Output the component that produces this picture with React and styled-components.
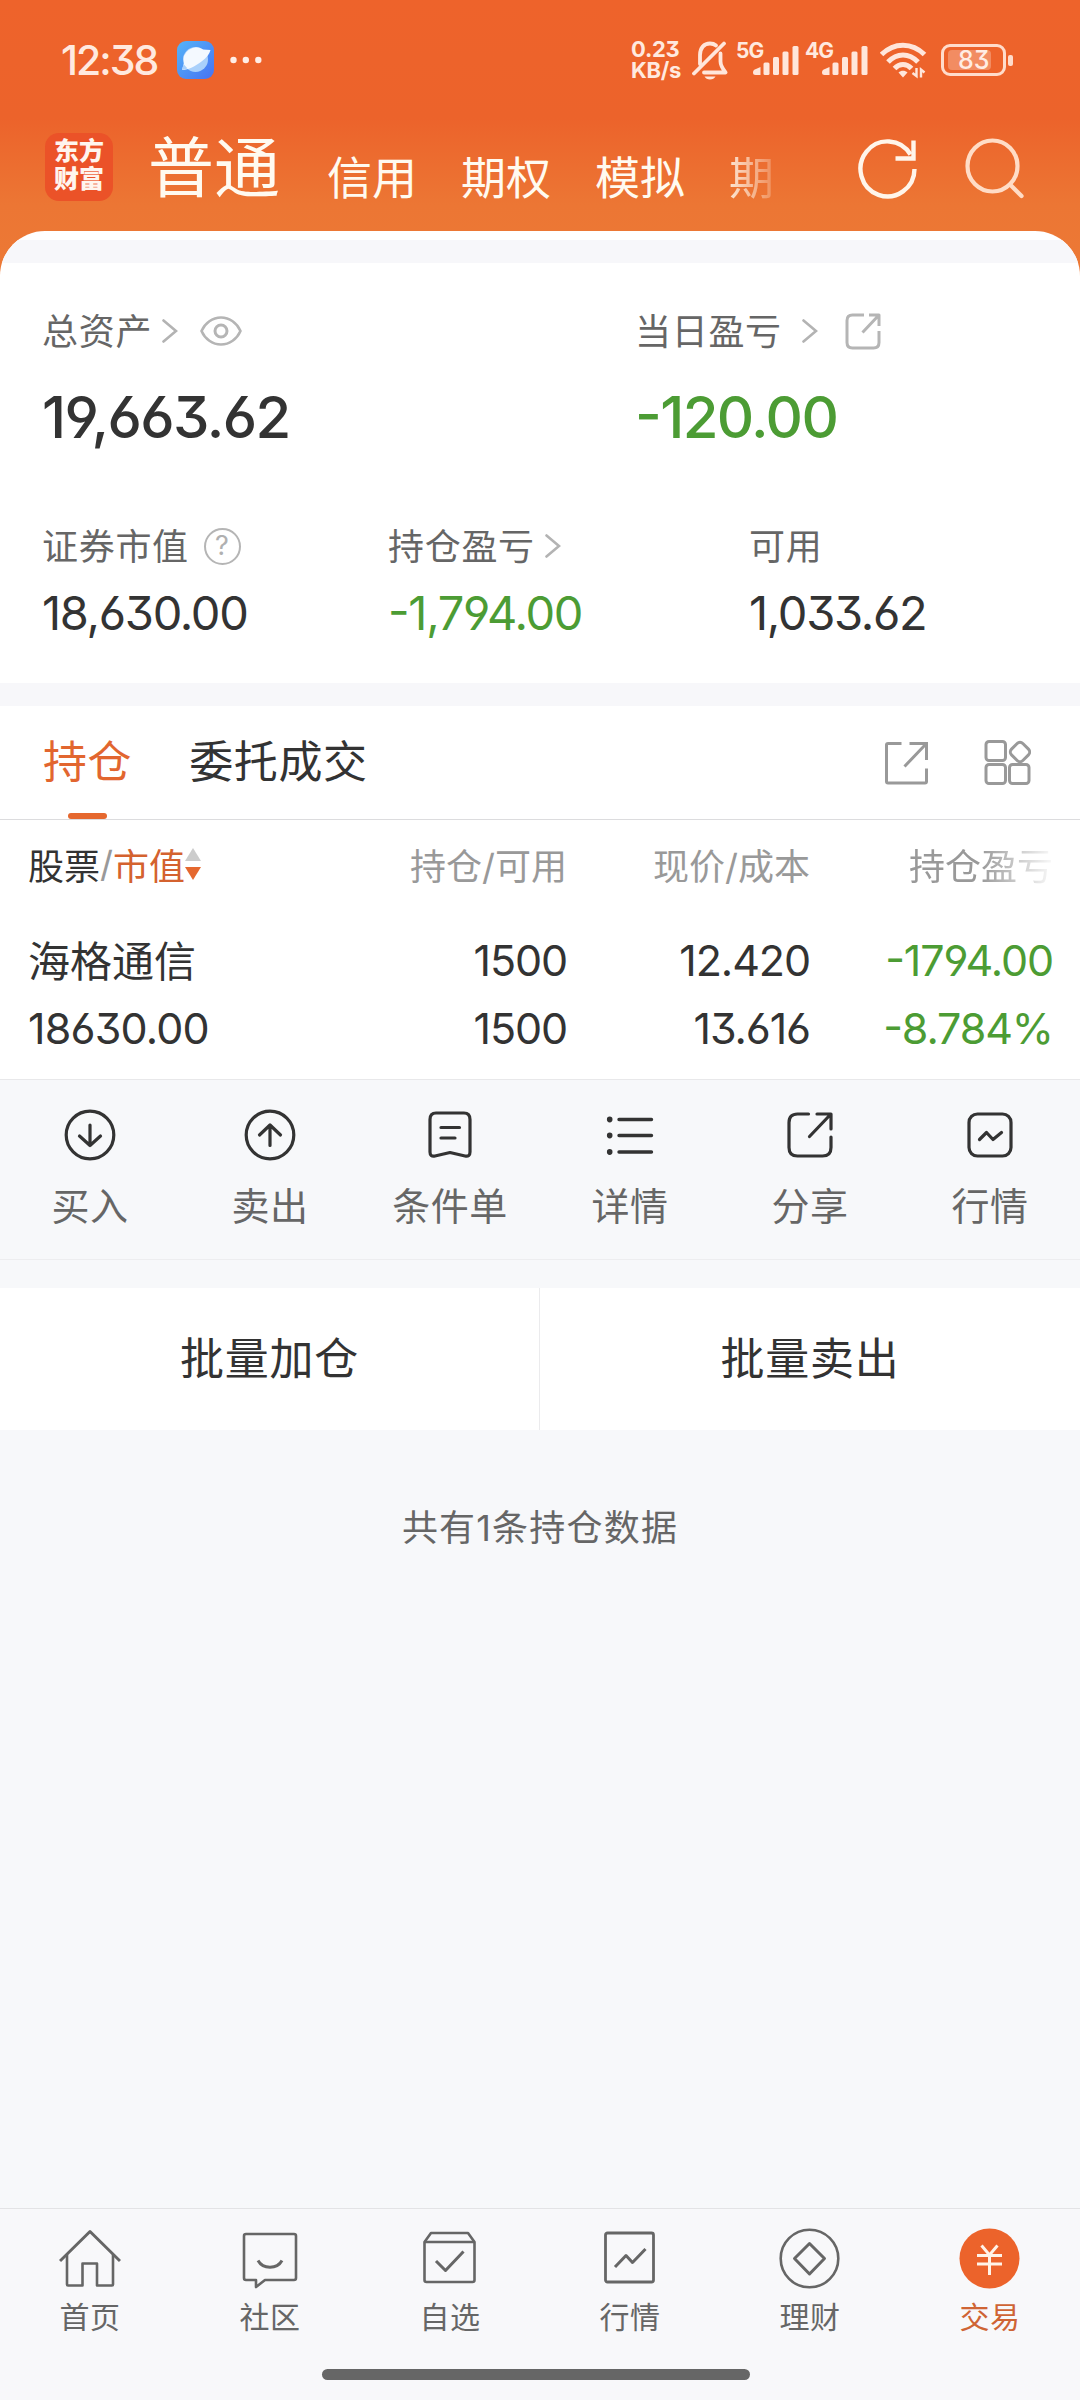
import styled, { createGlobalStyle } from "styled-components";

const actions = [
  { label: "买入", icon: <BuyIcon /> },
  { label: "卖出", icon: <SellIcon /> },
  { label: "条件单", icon: <OrderIcon /> },
  { label: "详情", icon: <ListIcon /> },
  { label: "分享", icon: <ShareRoundIcon /> },
  { label: "行情", icon: <TrendIcon /> },
];

const navItems = [
  { label: "首页", icon: <HomeIcon /> },
  { label: "社区", icon: <CommunityIcon /> },
  { label: "自选", icon: <WatchIcon /> },
  { label: "行情", icon: <MarketIcon /> },
  { label: "理财", icon: <WealthIcon /> },
  { label: "交易", icon: <TradeIcon />, active: true },
];

const App = () => {
  return (
    <>
      <GlobalStyle />
      <Screen>
        <StatusBar>
          <Clock>12:38</Clock>
          <PlanetIcon />
          <DotsIcon />
          <StatusRight>
            <Speed>
              0.23
              <br />
              KB/s
            </Speed>
            <BellOffIcon />
            <Network>5G</Network>
            <SignalIcon />
            <Network $second>4G</Network>
            <SignalIcon />
            <WifiIcon />
            <Battery>
              <div className="body">
                <span>83</span>
              </div>
              <div className="tip" />
            </Battery>
          </StatusRight>
        </StatusBar>

        <TopBar>
          <Logo>
            <span>东方</span>
            <span>财富</span>
          </Logo>
          <Modes>
            <Mode $active>普通</Mode>
            <Mode>信用</Mode>
            <Mode>期权</Mode>
            <Mode>模拟</Mode>
            <Mode $fade>期</Mode>
          </Modes>
          <TopIcons>
            <RefreshIcon />
            <SearchIcon />
          </TopIcons>
        </TopBar>

        <Sheet>
          <Band />
          <Account>
            <Stats $columns="593px 1fr">
              <Stat $big>
                <div className="label">
                  <span>总资产</span>
                  <Chevron $left={10} />
                  <EyeIcon />
                </div>
                <strong>19,663.62</strong>
              </Stat>
              <Stat $big $down>
                <div className="label">
                  <span>当日盈亏</span>
                  <Chevron $left={20} />
                  <ShareSmallIcon />
                </div>
                <strong>-120.00</strong>
              </Stat>
            </Stats>
            <Stats $columns="346px 361px 1fr">
              <Stat>
                <div className="label">
                  <span>证券市值</span>
                  <Help>?</Help>
                </div>
                <strong>18,630.00</strong>
              </Stat>
              <Stat $down>
                <div className="label">
                  <span>持仓盈亏</span>
                  <Chevron $left={10} />
                </div>
                <strong>-1,794.00</strong>
              </Stat>
              <Stat>
                <div className="label">
                  <span>可用</span>
                </div>
                <strong>1,033.62</strong>
              </Stat>
            </Stats>
          </Account>
          <Band />

          <Tabs>
            <Tab $active>持仓</Tab>
            <Tab>委托成交</Tab>
            <div className="tools">
              <ShareSquareIcon />
              <GridIcon />
            </div>
          </Tabs>

          <Table>
            <HeadRow>
              <div className="first">
                <b>股票</b>/<em>市值</em>
                <SortIcon />
              </div>
              <div>持仓/可用</div>
              <div>现价/成本</div>
              <div className="fade">持仓盈亏</div>
            </HeadRow>
            <Row>
              <div className="name">海格通信</div>
              <div>1500</div>
              <div>12.420</div>
              <div className="down">-1794.00</div>
            </Row>
            <Row>
              <div>18630.00</div>
              <div>1500</div>
              <div>13.616</div>
              <div className="down">-8.784%</div>
            </Row>
          </Table>

          <Actions>
            {actions.map(({ label, icon }) => (
              <Action key={label}>
                {icon}
                <span>{label}</span>
              </Action>
            ))}
          </Actions>

          <Batch>
            <button>批量加仓</button>
            <button>批量卖出</button>
          </Batch>

          <Summary>共有1条持仓数据</Summary>

          <BottomNav>
            <nav>
              {navItems.map(({ label, icon, active }) => (
                <NavItem key={label} $active={active}>
                  {icon}
                  <span>{label}</span>
                </NavItem>
              ))}
            </nav>
            <HomeBar />
          </BottomNav>
        </Sheet>
      </Screen>
    </>
  );
};

/* ---------- icons ---------- */

function PlanetIcon() {
  return (
    <svg width="37" height="38" viewBox="0 0 37 38">
      <defs>
        <linearGradient id="sky" x1="0" y1="0" x2="1" y2="1">
          <stop offset="0" stopColor="#55b4f8" />
          <stop offset="1" stopColor="#4672f3" />
        </linearGradient>
      </defs>
      <rect width="37" height="38" rx="9" fill="url(#sky)" />
      <circle cx="18.5" cy="18.5" r="12.5" fill="#a9d0fb" />
      <path d="M5 29l2-7a12.500 12.500 0 0 1 19-13.500l7.500.5c-1 4-4 8-9 11.500C18 25 12 29 5 29z" fill="#f4f9ff" />
      <path d="M5 29l1.500-6 4 4.500z" fill="#a9d0fb" />
    </svg>
  );
}

function DotsIcon() {
  return (
    <svg className="dots" width="32" height="8" viewBox="0 0 32 8" fill="#ffede6">
      <circle cx="3.500" cy="4" r="3.200" />
      <circle cx="15.800" cy="4" r="3.200" />
      <circle cx="28.300" cy="4" r="3.200" />
    </svg>
  );
}

function BellOffIcon() {
  return (
    <svg className="bell" width="36" height="40" viewBox="0 0 36 40" fill="none" stroke="#ffe6db" strokeWidth="3.800" strokeLinecap="round">
      <path d="M8 24V15C8 8 12 3.500 18 3.500c2.500 0 4.500.7 6 2" />
      <path d="M28.500 13.500v8c0 4 2 7 5 11H12" strokeLinejoin="round" />
      <path d="M32 3.500L2 33.500" />
      <path d="M12.500 36.500h11c-1 2-3 3-5.500 3s-4.500-1-5.500-3z" fill="#ffe6db" stroke="none" />
    </svg>
  );
}

function SignalIcon() {
  return (
    <svg className="signal" width="46" height="31" viewBox="0 0 46 31" fill="#ffe6db">
      <path d="M0 27.500q0-3 3-3.500l4.500-2v8H2.500Q0 30 0 27.500z" />
      <rect x="10.500" y="17.500" width="6" height="12.500" rx="1.500" />
      <rect x="20" y="12" width="6" height="18" rx="1.500" />
      <rect x="29.500" y="6.500" width="6" height="23.500" rx="1.500" />
      <rect x="39.500" y="1" width="6" height="29" rx="1.500" />
    </svg>
  );
}

function WifiIcon() {
  return (
    <svg className="wifi" width="48" height="37" viewBox="0 0 48 37" fill="none" stroke="#ffe6db" strokeWidth="5">
      <path d="M1.500 12.500C14 0 32 0 44.500 12.500" />
      <path d="M8 20C17 10.500 29 10.500 38 20" />
      <path d="M14.500 26.500c5-5.500 12-5.500 17 0" />
      <path d="M18.500 30.500c2.500-2.500 6.500-2.500 9 0L23 35.500z" fill="#ffe6db" stroke="none" />
      <path d="M36.500 26v8l-4-3M41 35.500v-8l3.500 3" strokeWidth="2.400" />
    </svg>
  );
}

function RefreshIcon() {
  return (
    <svg width="60" height="61" viewBox="0 0 60 61" fill="none" stroke="#fff5ea" strokeWidth="4.400">
      <path d="M56.500 31A27 27.500 0 1 1 52.500 16.500" />
      <path d="M55.500 2.500v18H37.500" />
    </svg>
  );
}

function SearchIcon() {
  return (
    <svg width="60" height="61" viewBox="0 0 60 61" fill="none" stroke="#ffdcc6" strokeWidth="4.200">
      <ellipse cx="27.500" cy="28" rx="25" ry="25.500" />
      <path d="M45 46.500L56.500 58" strokeLinecap="round" />
    </svg>
  );
}

function Chevron({ $left }) {
  return (
    <ChevronBox $left={$left}>
      <svg width="16" height="24" viewBox="0 0 16 24" fill="none" stroke="#b3b3b3" strokeWidth="2.600" strokeLinecap="round">
        <path d="M1.500 1.500L14 12 1.500 22.500" />
      </svg>
    </ChevronBox>
  );
}

function EyeIcon() {
  return (
    <svg className="eye" width="42" height="30" viewBox="0 0 42 30" fill="none" stroke="#b5b5b5" strokeWidth="2.600">
      <path d="M1.500 15C5 7 12.500 1.500 21 1.500S37 7 40.500 15C37 23 29.500 28.500 21 28.500S5 23 1.500 15z" strokeLinejoin="round" />
      <circle cx="21" cy="15" r="6" strokeWidth="3" />
    </svg>
  );
}

function ShareSmallIcon() {
  return (
    <svg className="share" width="36" height="37" viewBox="0 0 36 37" fill="none" stroke="#b5b5b5" strokeWidth="3">
      <path d="M19 2H7.500Q2 2 2 7.500v22Q2 35 7.500 35h21Q34 35 34 29.500V18" />
      <path d="M24 2h10v11M33.500 2.500L17.500 19.500" strokeLinejoin="round" />
    </svg>
  );
}

function ShareSquareIcon() {
  return (
    <svg width="44" height="44" viewBox="0 0 44 44" fill="none" stroke="#999" strokeWidth="3">
      <path d="M17.500 2.500H4Q2.500 2.500 2.500 4v36.500q0 1.500 1.500 1.500h37q1.500 0 1.500-1.500V27.500" />
      <path d="M25.500 2.500h17V19M41.500 3.500L20.500 25.500" />
    </svg>
  );
}

function GridIcon() {
  return (
    <svg width="47" height="47" viewBox="0 0 47 47" fill="none" stroke="#999" strokeWidth="3">
      <rect x="2" y="2.500" width="19.500" height="19" rx="3" />
      <rect x="2" y="25.500" width="19.500" height="19" rx="3" />
      <rect x="25.500" y="25.500" width="19.500" height="19" rx="3" />
      <rect x="28" y="5" width="16" height="16" rx="4" transform="rotate(45 36 13)" />
    </svg>
  );
}

function SortIcon() {
  return (
    <svg width="16" height="32" viewBox="0 0 16 32">
      <path d="M8 0l8 13H0z" fill="#ccc" />
      <path d="M0 19h16L8 32z" fill="#e5682f" />
    </svg>
  );
}

function BuyIcon() {
  return (
    <svg width="52" height="52" viewBox="0 0 52 52" fill="none" stroke="#333" strokeWidth="3.200" strokeLinecap="round" strokeLinejoin="round">
      <circle cx="26" cy="26" r="23.800" />
      <path d="M26 16v20.500M15.500 27L26 36.500 36.500 27" />
    </svg>
  );
}

function SellIcon() {
  return (
    <svg width="52" height="52" viewBox="0 0 52 52" fill="none" stroke="#333" strokeWidth="3.200" strokeLinecap="round" strokeLinejoin="round">
      <circle cx="26" cy="26" r="23.800" />
      <path d="M26 36.500V16M15.500 26L26 16l10.500 10" />
    </svg>
  );
}

function OrderIcon() {
  return (
    <svg width="52" height="52" viewBox="0 0 52 52" fill="none" stroke="#333" strokeWidth="3.200" strokeLinecap="round" strokeLinejoin="round">
      <path d="M12 4h28q6 0 6 6.500V43q0 5-5 4l-15-3.500L11 47q-5 1-5-4V10.500Q6 4 12 4z" />
      <path d="M17 18.500h18.500M17 29h14" />
    </svg>
  );
}

function ListIcon() {
  return (
    <svg width="52" height="52" viewBox="0 0 52 52" fill="none" stroke="#333" strokeWidth="3.400" strokeLinecap="round">
      <path d="M15 10.500h32.500M15 26.500h32.500M15 43h32.500" />
      <path d="M5.700 10.400v.2M5.700 26.400v.2M5.700 42.900v.2" strokeWidth="5.600" />
    </svg>
  );
}

function ShareRoundIcon() {
  return (
    <svg width="52" height="52" viewBox="0 0 52 52" fill="none" stroke="#333" strokeWidth="3.200" strokeLinecap="round" strokeLinejoin="round">
      <path d="M24.500 5H13.500Q5 5 5 13.500v25Q5 47 13.500 47h25Q47 47 47 38.500V28" />
      <path d="M33 5h14v15M46 6L25.500 27.500" />
    </svg>
  );
}

function TrendIcon() {
  return (
    <svg width="52" height="52" viewBox="0 0 52 52" fill="none" stroke="#333" strokeWidth="3.200" strokeLinecap="round" strokeLinejoin="round">
      <rect x="5" y="5" width="42" height="42" rx="8.500" />
      <path d="M15.500 30.500l7-7 6.500 7 8.500-7" />
    </svg>
  );
}

function HomeIcon() {
  return (
    <svg width="62" height="62" viewBox="0 0 62 62" fill="none" stroke="#666" strokeWidth="2.600" strokeLinejoin="round">
      <path d="M1 33L31 3.500l30 29.500" strokeWidth="3" />
      <path d="M8 26.500v30q0 1 1 1h14.500V35.500h14.500v22h15q1 0 1-1v-30" />
    </svg>
  );
}

function CommunityIcon() {
  return (
    <svg width="62" height="62" viewBox="0 0 62 62" fill="none" stroke="#666" strokeWidth="2.600" strokeLinejoin="round">
      <path d="M7 6h48q2 0 2 2v42q0 2-2 2H26l-9 7v-7H7q-2 0-2-2V8q0-2 2-2z" />
      <path d="M19 32.500c5 9 19 9 24 0" strokeWidth="3" />
    </svg>
  );
}

function WatchIcon() {
  return (
    <svg width="62" height="62" viewBox="0 0 62 62" fill="none" stroke="#666" strokeWidth="2.600" strokeLinejoin="round">
      <path d="M5.500 14l6.500-9h37l6.500 9v38q0 2-2 2h-46q-2 0-2-2z" />
      <path d="M5.500 14h50" />
      <path d="M17 33l9.500 9.500 18-19" strokeWidth="3" />
    </svg>
  );
}

function MarketIcon() {
  return (
    <svg width="62" height="62" viewBox="0 0 62 62" fill="none" stroke="#666" strokeWidth="2.800" strokeLinejoin="round">
      <rect x="6.500" y="5" width="48" height="49" rx="2" />
      <path d="M16 39l11-11.500 6.500 7 13-13.500" strokeWidth="3" />
    </svg>
  );
}

function WealthIcon() {
  return (
    <svg width="62" height="62" viewBox="0 0 62 62" fill="none" stroke="#666" strokeWidth="2.600" strokeLinejoin="round">
      <circle cx="30.500" cy="30.500" r="28.800" />
      <path d="M30.500 15.500L45.500 30.500 30.500 46 15.500 30.500z" strokeWidth="3" />
    </svg>
  );
}

function TradeIcon() {
  return (
    <svg width="62" height="62" viewBox="0 0 62 62" fill="none" stroke="#fff3e8" strokeWidth="3">
      <circle cx="30.500" cy="30.500" r="30" fill="#ec632b" stroke="none" />
      <path d="M22.500 17.500l8 9.500 8-9.500M30.500 27v20M18 27.500h25M18 36h25" />
    </svg>
  );
}

/* ---------- styles ---------- */

const GlobalStyle = createGlobalStyle`
  * {
    box-sizing: border-box;
  }
  body {
    margin: 0;
    font-family: Inter, "Noto Sans CJK SC", sans-serif;
    font-feature-settings: "cv03", "cv04", "cv09";
    color: #333;
  }
  svg {
    display: block;
    flex: none;
  }
`;

const Screen = styled.div`
  width: 1080px;
  height: 2400px;
  display: flex;
  flex-direction: column;
  overflow: hidden;
  background: linear-gradient(#ee632b 0, #ec632b 118px, #ec7634 205px, #ec7a36 300px);
`;

const StatusBar = styled.div`
  height: 120px;
  padding: 0 67px 0 61px;
  display: flex;
  align-items: center;

  .dots {
    margin-left: 16px;
  }
`;

const Clock = styled.div`
  width: 116px;
  font-size: 41px;
  font-weight: 500;
  letter-spacing: -2px;
  color: #ffe9df;
`;

const StatusRight = styled.div`
  margin-left: auto;
  display: flex;
  align-items: center;

  .bell {
    margin-left: 11px;
  }
  .signal {
    margin-left: -12px;
  }
  .wifi {
    margin-left: 12px;
  }
`;

const Speed = styled.div`
  width: 50px;
  font-size: 22px;
  font-weight: 700;
  line-height: 21px;
  letter-spacing: -0.3px;
  white-space: nowrap;
  color: #ffe9df;
`;

const Network = styled.span`
  width: 29px;
  margin-left: ${({ $second }) => ($second ? "6px" : "8px")};
  font-size: 21px;
  font-weight: 700;
  line-height: 21px;
  padding-bottom: 20px;
  letter-spacing: -1px;
  color: #ffe9df;
`;

const Battery = styled.div`
  display: flex;
  align-items: center;
  margin-left: 13px;

  .body {
    width: 65px;
    height: 32px;
    padding: 3px 12px 3px 4px;
    border: 3px solid #ffdccb;
    border-radius: 9px;
    display: flex;
  }
  span {
    flex: 1;
    padding-left: 10px;
    font-size: 25px;
    font-weight: 500;
    line-height: 21px;
    border-radius: 4px;
    color: #ffece3;
    background: #f28c62;
  }
  .tip {
    width: 5px;
    height: 11px;
    margin-left: 2px;
    border-radius: 2px;
    background: #ffdccb;
  }
`;

const TopBar = styled.header`
  height: 111px;
  padding: 0 55px 0 45px;
  display: flex;
`;

const Logo = styled.div`
  width: 68px;
  height: 68px;
  margin-top: 13px;
  padding-top: 4px;
  display: flex;
  flex-direction: column;
  align-items: center;
  border-radius: 14px;
  font-size: 25px;
  font-weight: 900;
  line-height: 28px;
  color: #fff5ee;
  background: #eb5228;
`;

const Modes = styled.div`
  display: flex;
  align-items: flex-start;
  margin-left: 35px;
  gap: 44px;
`;

const Mode = styled.div`
  font-size: ${({ $active }) => ($active ? "66px" : "45px")};
  line-height: ${({ $active }) => ($active ? "96px" : "118px")};
  padding-right: ${({ $active }) => ($active ? "3px" : "0")};
  color: #fffaf0;
  ${({ $fade }) =>
    $fade && "mask-image: linear-gradient(90deg, rgba(0,0,0,.85), rgba(0,0,0,.2));"}
`;

const TopIcons = styled.div`
  display: flex;
  margin: 18px 0 0 auto;
  gap: 47px;
`;

const Sheet = styled.main`
  flex: 1;
  padding-top: 9px;
  display: flex;
  flex-direction: column;
  border-radius: 45px 45px 0 0;
  overflow: hidden;
  background: #fff;
`;

const Band = styled.div`
  flex: none;
  height: 23px;
  background: #f7f7fa;
`;

const Account = styled.section`
  height: 420px;
  padding: 46px 42px 0;
  display: flex;
  flex-direction: column;
  gap: 78px;
`;

const Stats = styled.div`
  display: grid;
  grid-template-columns: ${({ $columns }) => $columns};
`;

const Stat = styled.div`
  display: flex;
  flex-direction: column;
  gap: ${({ $big }) => ($big ? "35px" : "21px")};

  .label {
    height: 44px;
    display: flex;
    align-items: center;
    font-size: 36px;
    letter-spacing: 0.7px;
    color: #666;
  }
  .label > span:first-child {
    margin-top: -4px;
  }
  .eye {
    margin-left: 22px;
  }
  .share {
    margin-left: 27px;
  }
  strong {
    font-size: ${({ $big }) => ($big ? "58px" : "47px")};
    line-height: ${({ $big }) => ($big ? "58px" : "47px")};
    font-weight: ${({ $big }) => ($big ? 500 : 400)};
    letter-spacing: ${({ $big }) => ($big ? "-1.6px" : "-1.3px")};
    font-feature-settings: "cv03", "cv04", "cv09", "case";
    color: ${({ $down }) => ($down ? "#4c9c34" : "#333")};
  }
`;

const ChevronBox = styled.span`
  margin-left: ${({ $left }) => $left}px;
`;

const Help = styled.i`
  width: 37px;
  height: 37px;
  margin-left: 15px;
  border: 2.5px solid #b5b5b5;
  border-radius: 50%;
  font-size: 27px;
  font-style: normal;
  line-height: 32px;
  text-align: center;
  color: #b0b0b0;
`;

const Tabs = styled.div`
  height: 114px;
  flex: none;
  padding: 0 49px 0 43px;
  display: flex;
  gap: 57px;
  border-bottom: 1px solid #dcdcde;

  .tools {
    display: flex;
    align-items: center;
    margin-left: auto;
    gap: 56px;
  }
`;

const Tab = styled.div`
  display: flex;
  flex-direction: column;
  align-items: center;
  font-size: 44px;
  line-height: 112px;
  letter-spacing: 0.6px;
  color: ${({ $active }) => ($active ? "#e2662f" : "#333")};

  &::after {
    content: "";
    width: 39px;
    height: 6px;
    margin-top: -5px;
    border-radius: 3px;
    background: ${({ $active }) => ($active ? "#e5682f" : "transparent")};
  }
`;

const Table = styled.div`
  height: 260px;
  flex: none;
  padding: 10px 26px 0 28px;
  border-bottom: 1px solid #e8e8ea;
`;

const HeadRow = styled.div`
  height: 68px;
  margin-bottom: 28px;
  display: grid;
  grid-template-columns: 296px 243px 243px 243px;
  align-items: center;
  text-align: right;
  font-size: 36px;
  color: #999;

  .first {
    display: flex;
    align-items: center;
    white-space: nowrap;
  }
  b,
  em {
    font-weight: 400;
    font-style: normal;
    color: #333;
  }
  em {
    color: #d4622f;
  }
  .fade {
    mask-image: linear-gradient(90deg, #000 70%, rgba(0, 0, 0, 0.05));
  }
`;

const Row = styled.div`
  height: 68px;
  display: grid;
  grid-template-columns: 296px 243px 243px 243px;
  align-items: center;
  text-align: right;
  font-size: 43px;
  letter-spacing: -1.1px;
  font-feature-settings: "cv03", "cv04", "cv09", "case";

  > :first-child {
    text-align: left;
    letter-spacing: -0.8px;
  }
  .name {
    padding-bottom: 4px;
    font-size: 42px;
    letter-spacing: 0;
    white-space: nowrap;
  }
  .down {
    color: #4c9c34;
  }
`;

const Actions = styled.div`
  height: 180px;
  flex: none;
  display: grid;
  grid-template-columns: repeat(6, 1fr);
  border-bottom: 1px solid #ededef;
  background: #f7f8fa;
`;

const Action = styled.div`
  padding-top: 29px;
  display: flex;
  flex-direction: column;
  align-items: center;
  font-size: 38px;
  line-height: 56px;
  letter-spacing: 0.5px;
  color: #666;

  span {
    margin-top: 17px;
  }
`;

const Batch = styled.div`
  flex: none;
  height: 170px;
  padding-top: 28px;
  display: grid;
  grid-template-columns: 540px 540px;
  background: #f7f8fa;

  button {
    padding: 0 0 6px;
    border: 0;
    font: inherit;
    font-size: 44px;
    letter-spacing: 0.8px;
    color: #333;
    background: #fff;
  }
  button:first-child {
    border-right: 1px solid #ebebed;
  }
`;

const Summary = styled.div`
  flex: 1;
  padding-top: 73px;
  font-size: 36px;
  line-height: 50px;
  letter-spacing: 1.2px;
  text-align: center;
  color: #666;
  background: #f7f8fa;
`;

const BottomNav = styled.footer`
  height: 192px;
  flex: none;
  border-top: 1px solid #e3e3e5;
  background: #f8f8fa;

  nav {
    display: grid;
    grid-template-columns: repeat(6, 1fr);
  }
`;

const NavItem = styled.div`
  height: 160px;
  padding-top: 19px;
  display: flex;
  flex-direction: column;
  align-items: center;
  font-size: 30px;
  line-height: 40px;
  letter-spacing: 0.6px;
  color: ${({ $active }) => ($active ? "#cf6434" : "#666")};

  svg {
    margin-bottom: 7px;
  }
`;

const HomeBar = styled.div`
  width: 428px;
  height: 11px;
  margin-left: 322px;
  border-radius: 6px;
  background: #666;
`;

export default App;
